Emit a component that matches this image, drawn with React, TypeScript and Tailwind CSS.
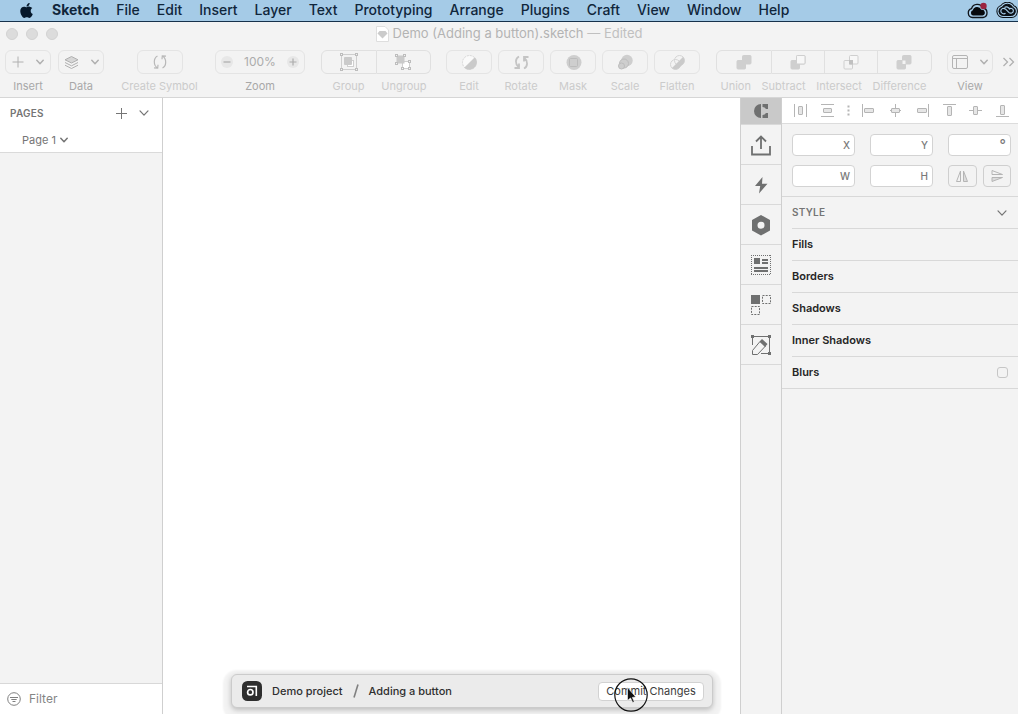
import type { ReactNode } from "react";
import { FaApple } from "react-icons/fa";

const menus = ["File", "Edit", "Insert", "Layer", "Text", "Prototyping", "Arrange", "Plugins", "Craft", "View", "Window", "Help"];

function Chevron({ size = 8, width = 1.5 }: { size?: number; width?: number }) {
  return (
    <svg width={size} height={size} viewBox="0 0 8 8" fill="none" stroke="currentColor" strokeWidth={width} strokeLinecap="round" strokeLinejoin="round">
      <path d="M0.8 2.3 4 5.7 7.2 2.3" />
    </svg>
  );
}

function Tool({ label, dim = true, wide = false, children }: { label: string; dim?: boolean; wide?: boolean; children: ReactNode }) {
  return (
    <div className={`flex shrink-0 flex-col items-center gap-0.5 ${wide ? "w-20" : "w-[46px]"}`}>
      <button
        aria-label={label}
        className={`flex h-6 items-center justify-center gap-3 rounded-md border border-[#e4e4e4] ${wide ? "w-[46px]" : "w-full"} ${dim ? "text-[#cdcdcd]" : "text-[#b0b0b0]"}`}
      >
        {children}
      </button>
      <span className={`text-[11px] leading-5 whitespace-nowrap ${dim ? "text-[#cbcbcb]" : "text-[#a8a8a8]"}`}>{label}</span>
    </div>
  );
}

function Segments({ items, labels }: { items: { label: string; icon: ReactNode; cell: string }[]; labels: string }) {
  return (
    <div className="flex shrink-0 flex-col gap-0.5">
      <div className="flex">
        {items.map((it, i) => (
          <button
            key={it.label}
            aria-label={it.label}
            className={`flex h-6 items-center justify-center border-y border-r border-[#e0e0e0] text-[#cdcdcd] ${it.cell} ${i === 0 ? "rounded-l-md border-l" : ""} ${i === items.length - 1 ? "rounded-r-md" : ""}`}
          >
            {it.icon}
          </button>
        ))}
      </div>
      <div className={`flex justify-between text-[11px] leading-5 whitespace-nowrap text-[#cbcbcb] ${labels}`}>
        {items.map((it) => <span key={it.label}>{it.label}</span>)}
      </div>
    </div>
  );
}

const handles = (pts: number[][]) =>
  pts.map(([x, y]) => <rect key={`${x}-${y}`} x={x - 1} y={y - 1} width="2" height="2" fill="#f3f3f3" stroke="#bdbdbd" />);

const groupIcon = (
  <svg width="18" height="18" viewBox="0 0 18 18">
    <rect x="1.5" y="1.5" width="15" height="15" fill="none" stroke="#cfcfcf" />
    <rect x="7.5" y="7.5" width="6" height="6" fill="#fff" stroke="#cfcfcf" />
    <rect x="4" y="4" width="8" height="8" rx="1" fill="#cacaca" />
    {handles([[1.5, 1.5], [16.5, 1.5], [1.5, 16.5], [16.5, 16.5]])}
  </svg>
);
const ungroupIcon = (
  <svg width="18" height="18" viewBox="0 0 18 18">
    <rect x="8.5" y="8.5" width="7" height="7" fill="#fff" stroke="#cfcfcf" />
    <rect x="2.5" y="2.5" width="8" height="8" fill="#cacaca" />
    {handles([[2.5, 2.5], [10.5, 2.5], [2.5, 10.5], [15.5, 8.5], [8.5, 15.5], [15.5, 15.5]])}
  </svg>
);

function BoolIcon({ kind }: { kind: "union" | "subtract" | "intersect" | "difference" }) {
  const solid = kind === "union" || kind === "difference";
  return (
    <svg width="16" height="16" viewBox="0 0 16 16">
      <rect x="6.5" y="1.500" width="8.500" height="8.500" rx="1" fill={solid ? "#cfcfcf" : "#f7f7f7"} stroke="#cfcfcf" />
      <rect x="1" y="6.500" width="8.500" height="8.500" rx="1" fill={kind === "intersect" ? "none" : "#cfcfcf"} stroke="#cfcfcf" />
      {kind === "subtract" && <rect x="6.500" y="1.500" width="8.500" height="8.500" rx="1" fill="#f7f7f7" stroke="#cfcfcf" />}
      {kind === "intersect" && <rect x="6" y="6" width="4" height="4.500" fill="#c0c0c0" />}
      {kind === "difference" && <rect x="6.500" y="6.500" width="3" height="3.500" fill="#f3f3f3" />}
    </svg>
  );
}

const round = (children: ReactNode) => (
  <svg width="17" height="17" viewBox="0 0 17 17" fill="none">{children}</svg>
);

function Field({ label }: { label: string }) {
  return (
    <label className="flex h-[22px] min-w-0 items-center rounded-[4px] border border-[#d3d3d3] bg-white pr-1 text-[10px] font-medium text-[#7a7a7a]">
      <input type="text" className="w-0 min-w-0 flex-1 bg-transparent pl-1 outline-none" />
      {label === "°" ? <span className="text-[14px] leading-4">°</span> : label}
    </label>
  );
}

const alignIcons: ReactNode[] = [
  <><path d="M1.5 1v13M13.5 1v13" /><rect x="5.5" y="3.5" width="4" height="8" rx="0.5" /></>,
  <><path d="M1 1.5h13M1 13.5h13" /><rect x="3.5" y="5.5" width="8" height="4" rx="0.5" /></>,
  <path d="M7.5 2.500v2M7.5 6.500v2M7.5 10.500v2" strokeWidth="2" />,
  <><path d="M1.5 1v13" /><rect x="3.5" y="5.5" width="9" height="4" rx="0.5" /></>,
  <><path d="M7.5 1v13M2 7.5h11" /><rect x="3.5" y="5.5" width="8" height="4" rx="0.5" /></>,
  <><path d="M13.5 1v13" /><rect x="2.5" y="5.5" width="9" height="4" rx="0.5" /></>,
  <><path d="M1 1.5h13" /><rect x="5.5" y="3.5" width="4" height="9" rx="0.5" /></>,
  <><path d="M1 7.5h13" /><rect x="5.5" y="3.5" width="4" height="8" rx="0.5" /></>,
  <><path d="M1 13.5h13" /><rect x="5.5" y="2.5" width="4" height="9" rx="0.5" /></>,
];
const alignLabels = ["Distribute horizontally", "Distribute vertically", "More", "Align left", "Align center", "Align right", "Align top", "Align middle", "Align bottom"];

const stripIcons: { label: string; icon: ReactNode }[] = [
  {
    label: "Upload",
    icon: <path d="M1 11v8.500h18V11M10 14V2M5 6.500l5-5 5 5" fill="none" stroke="currentColor" strokeWidth="1.800" />,
  },
  { label: "Prototype", icon: <path d="M11.500 2 4 11h5.200L8 18.500 16.500 8.800h-5.500z" fill="currentColor" /> },
  {
    label: "Plugins",
    icon: <path d="M10 0 19 5v10.500L10 20.500 1 15.500V5zM10 6.700a3.500 3.500 0 1 0 0 7 3.500 3.500 0 0 0 0-7z" fill="currentColor" fillRule="evenodd" />,
  },
  {
    label: "Data",
    icon: (
      <>
        <path d="M0 .5h20M0 19.500h20M.5 0v20M19.500 0v20" fill="none" stroke="currentColor" strokeDasharray="1 1" />
        <path d="M3 3h6v6H3zM11 4h6v2h-6zM11 7h6v2h-6zM3 12h14v2H3zM3 15h14v2H3z" fill="currentColor" />
      </>
    ),
  },
  {
    label: "Duplicate",
    icon: (
      <>
        <path d="M0 0h9v9H0z" fill="currentColor" />
        <path d="M11.500 0.500h8v8h-8zM0.500 11.500h8v8h-8z" fill="none" stroke="currentColor" strokeDasharray="2 1.200" />
      </>
    ),
  },
  {
    label: "Stylesheet",
    icon: (
      <>
        <path d="M1.500 10V1.500h17v17H10M1.500 19.500v-4l7.500-9 5.500 4.500-8 8.500z" fill="none" stroke="currentColor" strokeWidth="1" />
        <path d="m8.500 6.500 2.500-2.500 5.500 5-2.500 3zM0 0h3v3H0zM17 0h3v3h-3zM17 17h3v3h-3z" fill="currentColor" />
      </>
    ),
  },
];

const sections = ["Fills", "Borders", "Shadows", "Inner Shadows"];
const ccShape = "M7 13.500a4.200 4.200 0 0 1-.8-8.300 6 6 0 0 1 10.500.2 4.200 4.200 0 0 1-1.200 8.100z";

function MenuBar() {
  return (
    <header className="flex h-[22px] shrink-0 items-start justify-between border-b border-[#17324c] bg-[#a5cbe7] pl-[18px] text-[14px] leading-5 text-[#10263b]">
      <nav className="flex items-center gap-[17px]">
        <button aria-label="Apple menu" className="w-[17px] text-[#06182b]"><FaApple size={17} /></button>
        <button className="font-bold">Sketch</button>
        {menus.map((m) => <button key={m} className="font-medium">{m}</button>)}
      </nav>
      <div className="flex h-5 items-center gap-2">
        <button aria-label="Cloud sync">
          <svg width="21" height="17" viewBox="0 0 21 17">
            <path d="M5.500 15.500a4.500 4.500 0 0 1-1-8.800 6 6 0 0 1 11.300-.7 4.800 4.800 0 0 1 .2 9.500z" fill="none" stroke="#10141a" strokeWidth="1.300" />
            <path d="M6 13.500a2.700 2.700 0 0 1-.2-5.200 4.500 4.500 0 0 1 8.500-.5 2.900 2.900 0 0 1 1.200 5.700z" fill="#06080c" />
            <circle cx="16.500" cy="4" r="3.200" fill="#9b2340" />
          </svg>
        </button>
        <button aria-label="Creative Cloud">
          <svg width="22" height="17" viewBox="0 0 22 17" fill="none">
            <path d={ccShape} stroke="#0b1016" strokeWidth="5" />
            <path d={ccShape} stroke="#a5cbe7" strokeWidth="3" />
            <path d={ccShape} fill="#0b1016" stroke="#0b1016" />
            <path d="M9.500 11.300C8 12.500 4.800 11.500 4.800 9s3-3.500 4.800-1.800l3.200 3.200c1.800 1.600 4.600.5 4.600-1.700s-2.800-3.200-4.600-1.600M8.500 5.500c1.800-1.300 4.500-.5 5.300 2" stroke="#a5cbe7" strokeWidth="1.200" />
          </svg>
        </button>
      </div>
    </header>
  );
}

function Toolbar() {
  return (
    <div className="flex h-12 shrink-0 items-start justify-between border-b border-[#d6d6d6] pr-[3px] pl-[5px]">
      <div className="flex shrink-0 gap-[7px]">
        <Tool label="Insert" dim={false}>
          <svg width="12" height="12" viewBox="0 0 12 12" stroke="currentColor"><path d="M6 0.500v11M0.500 6h11" /></svg>
          <Chevron />
        </Tool>
        <Tool label="Data" dim={false}>
          <svg width="15" height="15" viewBox="0 0 15 15" fill="none" stroke="currentColor">
            <path d="M7.500 1.500 14 4.800 7.500 8 1 4.800z" fill="#d6d6d6" />
            <path d="M1 7.500 7.500 10.800 14 7.500M1 10.200l6.500 3.300 6.500-3.300" />
          </svg>
          <Chevron />
        </Tool>
      </div>
      <Tool label="Create Symbol" wide>
        <svg width="16" height="16" viewBox="0 0 16 16" fill="none" stroke="#b8b8b8" strokeWidth="1.200">
          <path d="M5.500 2C1.500 4 1 11 5.500 14M2 13.800l3.700.4.300-3.500M10.500 14c4-2 4.500-9 0-12M14 2.200l-3.700-.4L10 5.300" />
        </svg>
      </Tool>
      <div className="flex w-[90px] shrink-0 flex-col items-center gap-0.5">
        <div className="flex h-6 w-full items-center justify-between rounded-md border border-[#e4e4e4] px-[5px] text-[#acacac]">
          <button aria-label="Zoom out" className="flex size-3 items-center justify-center rounded-full bg-[#e7e7e7]">
            <svg width="8" height="8" viewBox="0 0 8 8" stroke="currentColor" strokeWidth="1.200"><path d="M0.500 4h7" /></svg>
          </button>
          <span className="text-[12px]">100%</span>
          <button aria-label="Zoom in" className="flex size-3 items-center justify-center rounded-full bg-[#e7e7e7]">
            <svg width="8" height="8" viewBox="0 0 8 8" stroke="currentColor" strokeWidth="1.200"><path d="M0.500 4h7M4 0.500v7" /></svg>
          </button>
        </div>
        <span className="text-[11px] leading-5 text-[#a8a8a8]">Zoom</span>
      </div>
      <Segments labels="pr-1 pl-3" items={[
        { label: "Group", icon: groupIcon, cell: "w-14" },
        { label: "Ungroup", icon: ungroupIcon, cell: "w-[54px]" },
      ]} />
      <div className="flex shrink-0 gap-1.5">
        <Tool label="Edit">
          {round(<><circle cx="8.500" cy="8.500" r="7" fill="#fafafa" stroke="#d5d5d5" strokeDasharray="2 1" /><path d="M13.800 3.200A7.500 7.500 0 0 1 3.200 13.800z" fill="#cacaca" /></>)}
        </Tool>
        <Tool label="Rotate">
          {round(<path d="M6 2.500C2 4.500 2 10 5.500 13M1.500 14h4.500V9.500M11 14.500c4-2 4-7.500.5-10.500M15.500 3h-4.500v4.500" stroke="#c4c4c4" strokeWidth="1.800" />)}
        </Tool>
        <Tool label="Mask">
          {round(<><circle cx="9" cy="8.500" r="7.500" fill="#cecece" /><rect x="4.500" y="4.500" width="8" height="8" rx="1" stroke="#bcbcbc" /></>)}
        </Tool>
        <Tool label="Scale">
          {round(<><circle cx="10" cy="6.500" r="5.700" fill="#cecece" /><circle cx="7" cy="9.500" r="4.500" fill="#cecece" stroke="#bdbdbd" /><circle cx="4.500" cy="12" r="3" fill="#cecece" stroke="#bdbdbd" /></>)}
        </Tool>
        <Tool label="Flatten">
          {round(<><circle cx="6.500" cy="10.500" r="5" stroke="#d5d5d5" /><circle cx="10.500" cy="6.500" r="5" stroke="#d5d5d5" /><path d="M14 3a5 5 0 0 1 0 7l-4 4a5 5 0 0 1-7 0z" fill="#cacaca" /></>)}
        </Tool>
      </div>
      <Segments labels="px-[5px]" items={[
        { label: "Union", icon: <BoolIcon kind="union" />, cell: "w-14" },
        { label: "Subtract", icon: <BoolIcon kind="subtract" />, cell: "w-[53px]" },
        { label: "Intersect", icon: <BoolIcon kind="intersect" />, cell: "w-[53px]" },
        { label: "Difference", icon: <BoolIcon kind="difference" />, cell: "w-[54px]" },
      ]} />
      <div className="flex shrink-0 gap-[9px]">
        <Tool label="View" dim={false}>
          <svg width="16" height="14" viewBox="0 0 16 14" fill="none" stroke="#b4b4b4"><rect x="0.500" y="0.500" width="15" height="13" rx="1.500" /><path d="M0.500 3.500h15M4.500 3.500v10" /></svg>
          <Chevron />
        </Tool>
        <button aria-label="More tools" className="flex h-6 items-center">
          <svg width="13" height="10" viewBox="0 0 13 10" fill="none" stroke="#b0b0b0" strokeWidth="1.300"><path d="m1.500 1 4 4-4 4M7.500 1l4 4-4 4" /></svg>
        </button>
      </div>
    </div>
  );
}

function Sidebar() {
  return (
    <aside className="flex w-[163px] shrink-0 flex-col border-r border-[#cfcfcf]">
      <div className="flex h-[55px] flex-col border-b border-[#dadada] bg-white text-[#757575]">
        <div className="flex h-[31px] items-center justify-between pr-[13px] pl-2.5">
          <h2 className="text-[10px] font-semibold tracking-wide">PAGES</h2>
          <div className="flex items-center gap-3">
            <button aria-label="Add page"><svg width="11" height="11" viewBox="0 0 11 11" stroke="currentColor"><path d="M5.500 0v11M0 5.500h11" /></svg></button>
            <button aria-label="Collapse pages"><Chevron size={10} width={1} /></button>
          </div>
        </div>
        <button className="flex h-6 items-center gap-1 pl-[22px] text-[11px]">Page 1 <Chevron /></button>
      </div>
      <div className="flex-1" />
      <label className="flex h-[31px] items-center gap-2 border-t border-[#d8d8d8] bg-white pl-[7px] text-[#808080]">
        <svg width="14" height="14" viewBox="0 0 14 14" fill="none" stroke="currentColor"><circle cx="7" cy="7" r="6.300" /><path d="M3 5.500h8M4.300 7.500h5.400M5.500 9.500h3" /></svg>
        <input aria-label="Filter" placeholder="Filter" className="min-w-0 flex-1 text-[12px] outline-none placeholder:text-[#858585]" />
      </label>
    </aside>
  );
}

function Strip() {
  return (
    <div className="flex w-[42px] shrink-0 flex-col border-x border-[#cfcfcf] text-[#6f7070]">
      <button aria-label="Craft" className="flex h-[27px] items-center justify-center border-b border-[#d9d9d9] bg-[#c9c9c9]">
        <svg width="14" height="14" viewBox="0 0 14 14" fill="currentColor"><path d="M7 0v14A7 7 0 0 1 7 0zM8.500 0H14v5H12A4 4 0 0 0 8.500 3zM8.500 14H14V9H12A4 4 0 0 1 8.500 11z" /></svg>
      </button>
      {stripIcons.map((s) => (
        <button key={s.label} aria-label={s.label} className="flex h-10 items-center justify-center border-b border-[#d9d9d9] pt-0.5">
          <svg width="20" height="21" viewBox="0 0 20 21">{s.icon}</svg>
        </button>
      ))}
    </div>
  );
}

function Inspector() {
  return (
    <aside className="w-59 shrink-0">
      <div className="flex h-[26px] items-center justify-between border-b border-[#dcdcdc] bg-white pr-2 pl-[11px]">
        {alignIcons.map((icon, i) => (
          <button key={alignLabels[i]} aria-label={alignLabels[i]}>
            <svg width={i === 2 ? 3 : 15} height="15" viewBox={i === 2 ? "6 0 3 15" : "0 0 15 15"} fill="#e6e6e6" stroke="#b5b5b5">{icon}</svg>
          </button>
        ))}
      </div>
      <div className="grid grid-cols-3 gap-x-[15px] gap-y-[9px] border-b border-[#d8d8d8] pt-[10px] pr-[7px] pb-[9px] pl-2.5">
        <Field label="X" />
        <Field label="Y" />
        <Field label="°" />
        <Field label="W" />
        <Field label="H" />
        <div className="flex gap-1.5">
          <button aria-label="Flip horizontal" className="flex h-[22px] flex-1 items-center justify-center rounded-[4px] border border-[#cfcfcf]">
            <svg width="12" height="12" viewBox="0 0 12 12" stroke="#b5b5b5"><path d="M4.500 1v10.500h-4z" fill="none" /><path d="M7.500 1v10.500h4z" fill="#dcdcdc" /></svg>
          </button>
          <button aria-label="Flip vertical" className="flex h-[22px] flex-1 items-center justify-center rounded-[4px] border border-[#cfcfcf]">
            <svg width="12" height="12" viewBox="0 0 12 12" stroke="#b5b5b5"><path d="M1 4.500h10.500L1 .5z" fill="none" /><path d="M1 7.500h10.500L1 11.500z" fill="#dcdcdc" /></svg>
          </button>
        </div>
      </div>
      <div className="border-b border-[#d8d8d8] pl-2.5 text-[11px]">
        <div className="flex h-[31px] items-center justify-between pr-[11px] text-[#757575]">
          <h2 className="text-[10px] font-semibold tracking-wide">STYLE</h2>
          <button aria-label="Collapse style"><Chevron size={10} width={1} /></button>
        </div>
        {sections.map((s) => (
          <div key={s} className="flex h-8 items-center border-t border-[#d8d8d8]"><h3 className="font-semibold text-[#262626]">{s}</h3></div>
        ))}
        <label className="flex h-8 items-center justify-between border-t border-[#d8d8d8] pr-2.5 font-semibold text-[#262626]">
          Blurs
          <input type="checkbox" className="size-[11px] appearance-none rounded-[3px] border border-[#c6c6c6]" />
        </label>
      </div>
    </aside>
  );
}

function CommitBar() {
  return (
    <div className="absolute bottom-1.5 left-[231px] flex h-[34px] w-[482px] items-center rounded-md border border-[#cbcbcb] bg-[#ebebeb] pr-2 pl-2.5 text-[12px] shadow-[0_2px_5px_rgba(0,0,0,0.22),0_4px_2px_8px_rgba(0,0,0,0.05)]">
      <svg width="20" height="20" viewBox="0 0 20 20" className="mr-2.5">
        <rect width="20" height="20" rx="5.500" fill="#2e2e2e" />
        <path d="M5 5.500h9.300V15" fill="none" stroke="#fff" strokeWidth="1.600" />
        <circle cx="8.300" cy="11.200" r="2.700" fill="none" stroke="#fff" strokeWidth="1.700" />
      </svg>
      <span className="text-[11px] font-medium text-[#2f2f2f]">Demo project</span>
      <svg width="6" height="14" viewBox="0 0 6 14" className="mx-2.5" stroke="#808080" strokeWidth="1.600"><path d="M5 0.500 1 13.500" /></svg>
      <span className="text-[11px] font-medium text-[#2f2f2f]">Adding a button</span>
      <button className="ml-auto flex h-[19px] w-[106px] items-center justify-center rounded-[4px] border border-[#d2d2d2] bg-white text-[11px] whitespace-nowrap text-[#3c3c3c]">Commit Changes</button>
      <svg width="34" height="34" viewBox="0 0 34 34" className="pointer-events-none absolute top-[3px] left-[382px]">
        <circle cx="17" cy="17" r="16.200" fill="none" stroke="#111" strokeWidth="1.200" />
        <path d="M13.500 9.500v13l3-2.500 2.200 4.500 1.600-.8-2-4.300 3.500-.4z" fill="#111" stroke="#fff" strokeWidth="0.600" />
      </svg>
    </div>
  );
}

export default function App() {
  return (
    <div className="relative flex h-screen flex-col overflow-hidden bg-[#f3f3f3] font-['Inter',sans-serif]">
      <MenuBar />
      <div className="mb-1 flex h-6 shrink-0 items-center justify-center gap-1 text-[13px] text-[#b3b3b3]">
        <svg width="13" height="16" viewBox="0 0 13 16"><path d="M.5.5h8.500l3.500 3.500v11.500H.5z" fill="#fff" stroke="#dedede" /><path d="M3.500 5h6l2 2.500-5 5-5-5z" fill="#cbcbcb" /></svg>
        <h1>Demo (Adding a button).sketch <span className="text-[#c0c0c0]">— Edited</span></h1>
        <div className="absolute left-1.5 flex gap-2">
          {["Close", "Minimize", "Full screen"].map((l) => <button key={l} aria-label={l} className="size-3 rounded-full border border-[#d2d2d2] bg-[#dcdcdc]" />)}
        </div>
      </div>
      <Toolbar />
      <main className="flex min-h-0 flex-1">
        <Sidebar />
        <section aria-label="Canvas" className="min-w-0 flex-1 bg-white" />
        <Strip />
        <Inspector />
      </main>
      <CommitBar />
    </div>
  );
}
